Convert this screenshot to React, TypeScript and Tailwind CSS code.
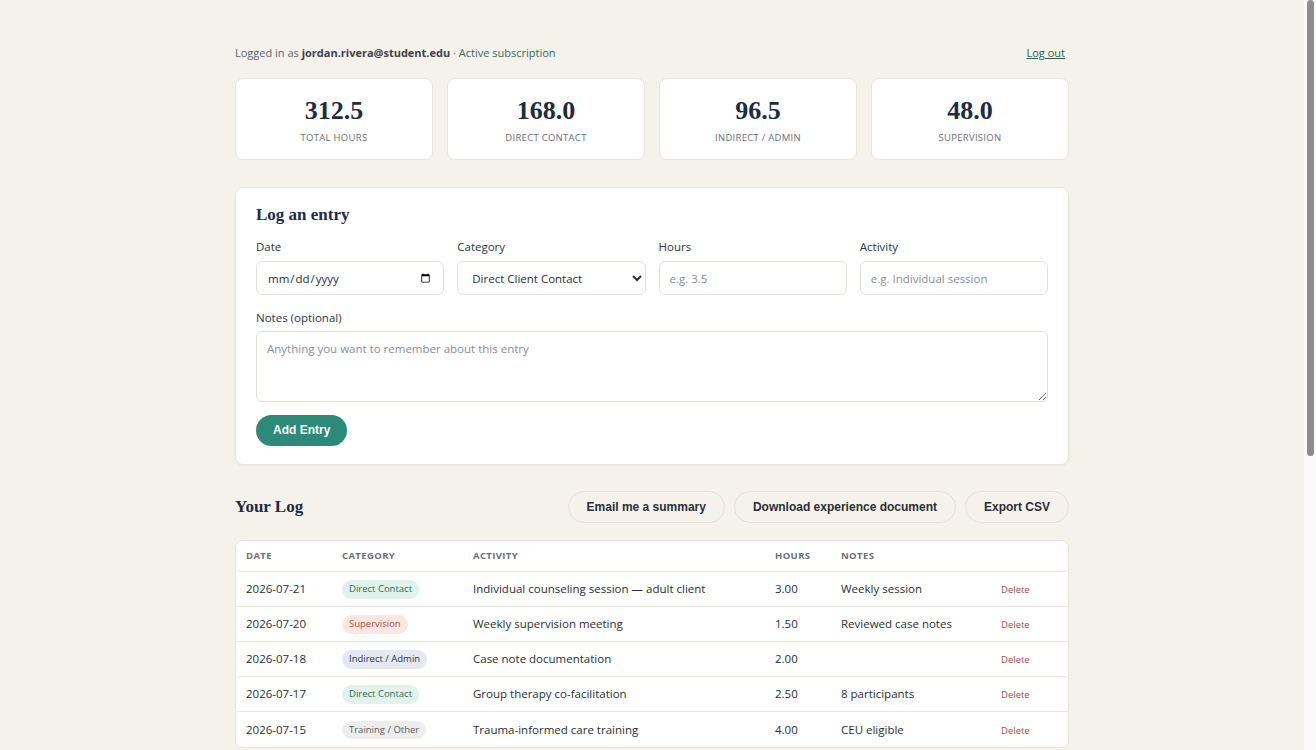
import React from "react";

type Entry = {
  date: string;
  category: "direct" | "supervision" | "indirect" | "training";
  activity: string;
  hours: string;
  notes: string;
};

const badgeStyles: Record<Entry["category"], { label: string; cls: string }> = {
  direct: { label: "Direct Contact", cls: "bg-[#e1f1eb] text-[#2b6e5b]" },
  supervision: { label: "Supervision", cls: "bg-[#fbe6e2] text-[#b24c3f]" },
  indirect: { label: "Indirect / Admin", cls: "bg-[#e5e8ee] text-[#2b3648]" },
  training: { label: "Training / Other", cls: "bg-[#ededec] text-[#555a60]" },
};

const entries: Entry[] = [
  { date: "2026-07-21", category: "direct", activity: "Individual counseling session — adult client", hours: "3.00", notes: "Weekly session" },
  { date: "2026-07-20", category: "supervision", activity: "Weekly supervision meeting", hours: "1.50", notes: "Reviewed case notes" },
  { date: "2026-07-18", category: "indirect", activity: "Case note documentation", hours: "2.00", notes: "" },
  { date: "2026-07-17", category: "direct", activity: "Group therapy co-facilitation", hours: "2.50", notes: "8 participants" },
  { date: "2026-07-15", category: "training", activity: "Trauma-informed care training", hours: "4.00", notes: "CEU eligible" },
];

const stats = [
  { value: "312.5", label: "Total Hours" },
  { value: "168.0", label: "Direct Contact" },
  { value: "96.5", label: "Indirect / Admin" },
  { value: "48.0", label: "Supervision" },
];

const serif = "font-['Georgia','Liberation_Serif',serif]";
const labelCls = "flex flex-col gap-[6px] text-[11.5px] text-[#2f3540]";
const inputCls =
  "h-[34px] w-full rounded-md border border-[#e4e0da] bg-white px-2.5 text-[11.5px] text-[#2a2f36] placeholder:text-[#8a8f96] outline-none";
const pillBtn = "h-[32px] rounded-full border border-[#e6e0d6] bg-[#f5f1eb] px-[18px]";

function ScrollRail() {
  return (
    <div className="fixed top-0 right-0 h-screen w-3 bg-[#fafafa]">
      <div className="mx-auto h-[456px] w-[7px] rounded-full bg-[#8d8d8d]" />
    </div>
  );
}

export default function App() {
  return (
    <div className="min-h-screen bg-[#f5f1eb] pr-3 font-['Segoe_UI','Open_Sans',sans-serif] text-[#2a2f36]">
      <div className="mx-auto w-[834px] pt-[45px] pb-12">
        <div className="flex items-center justify-between text-[11px]">
          <p className="text-[#5d636b]">
            Logged in as <span className="font-bold text-[#3d434b]">jordan.rivera@student.edu</span> ·{" "}
            <span className="text-[#2f6f5c]">Active subscription</span>
          </p>
          <a href="#" className="mr-[4px] text-[#2f5f4f] underline">
            Log out
          </a>
        </div>

        <div className="mt-[16px] grid grid-cols-4 gap-[14px]">
          {stats.map((s) => (
            <div
              key={s.label}
              className="flex h-[82px] flex-col items-center justify-center rounded-lg border border-[#ebe5dc] bg-white"
            >
              <div className={`${serif} mt-[6px] text-[26px] leading-none font-bold text-[#1d2b45]`}>{s.value}</div>
              <div className="mt-[7px] text-[9.5px] uppercase tracking-[0.03em] text-[#6b7077]">{s.label}</div>
            </div>
          ))}
        </div>

        <div className="mt-[27px] rounded-lg border border-[#ebe5dc] bg-white px-5 pt-[14px] pb-[18px] shadow-[0_1px_3px_rgba(0,0,0,0.05)]">
          <h2 className={`${serif} text-[17px] font-bold text-[#1d2b45]`}>Log an entry</h2>
          <div className="mt-[11px] grid grid-cols-4 gap-x-[13px]">
            <label className={labelCls}>
              Date
              <input type="date" className={inputCls} />
            </label>
            <label className={labelCls}>
              Category
              <select className={inputCls} defaultValue="direct">
                <option value="direct">Direct Client Contact</option>
                <option value="indirect">Indirect / Admin</option>
                <option value="supervision">Supervision</option>
                <option value="training">Training / Other</option>
              </select>
            </label>
            <label className={labelCls}>
              Hours
              <input type="text" placeholder="e.g. 3.5" className={`${inputCls} h-[33px]`} />
            </label>
            <label className={labelCls}>
              Activity
              <input type="text" placeholder="e.g. Individual session" className={`${inputCls} h-[33px]`} />
            </label>
          </div>
          <label className="mt-[14px] flex flex-col gap-[4px] text-[11.5px] text-[#2f3540]">
            Notes (optional)
            <textarea
              placeholder="Anything you want to remember about this entry"
              className="h-[71px] w-full rounded-md border border-[#e4e0da] px-2.5 py-2 text-[11.5px] placeholder:text-[#8a8f96] outline-none"
            />
          </label>
          <button className="mt-[13px] h-[31px] rounded-full bg-[#2e8a78] px-[17px] font-['Arial','Liberation_Sans',sans-serif] text-[12px] font-bold text-white">
            Add Entry
          </button>
        </div>

        <div className="mt-[26px] flex items-center justify-between">
          <h2 className={`${serif} text-[17px] font-bold text-[#1d2b45]`}>Your Log</h2>
          <div className="flex gap-[9px] font-['Arial','Liberation_Sans',sans-serif] text-[12px] font-bold text-[#2a2f36]">
            <button className={pillBtn}>Email me a summary</button>
            <button className={pillBtn}>Download experience document</button>
            <button className={pillBtn}>Export CSV</button>
          </div>
        </div>

        <div className="mt-[17px] overflow-hidden rounded-lg border border-[#ebe5dc] bg-white">
          <table className="w-full table-fixed border-collapse text-left">
            <colgroup>
              <col className="w-[98px]" />
              <col className="w-[129px]" />
              <col className="w-[302px]" />
              <col className="w-[66px]" />
              <col className="w-[160px]" />
              <col />
            </colgroup>
            <thead>
              <tr className="h-[31px] text-[9.5px] uppercase tracking-[0.04em] text-[#6b7077]">
                <th className="pl-[10px] font-bold">Date</th>
                <th className="pl-[8px] font-bold">Category</th>
                <th className="pl-[10px] font-bold">Activity</th>
                <th className="pl-[10px] font-bold">Hours</th>
                <th className="pl-[10px] font-bold">Notes</th>
                <th />
              </tr>
            </thead>
            <tbody className="text-[11.5px] text-[#2a2f36]">
              {entries.map((e, i) => {
                const b = badgeStyles[e.category];
                return (
                  <tr key={i} className="h-[35px] border-t border-[#ece8e2]">
                    <td className="pl-[10px]">{e.date}</td>
                    <td className="pl-[8px]">
                      <span className={`inline-block rounded-full px-[7px] py-[2px] text-[9.5px] ${b.cls}`}>{b.label}</span>
                    </td>
                    <td className="pl-[10px]">{e.activity}</td>
                    <td className="pl-[10px]">{e.hours}</td>
                    <td className="pl-[10px]">{e.notes}</td>
                    <td className="pl-[10px]">
                      <button className="text-[9.5px] text-[#a0503f]">Delete</button>
                    </td>
                  </tr>
                );
              })}
            </tbody>
          </table>
        </div>
      </div>
      <ScrollRail />
    </div>
  );
}
